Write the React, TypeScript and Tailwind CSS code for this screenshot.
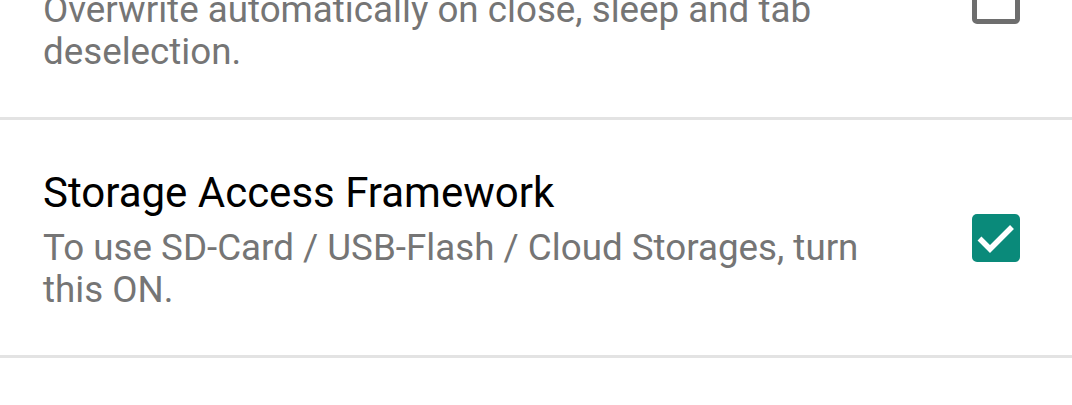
import React from "react";

type Pref = {
  title: string;
  summary: string;
  checked: boolean;
};

const prefs: Pref[] = [
  {
    title: "Auto save",
    summary: "Overwrite automatically on close, sleep and tab deselection.",
    checked: false,
  },
  {
    title: "Storage Access Framework",
    summary: "To use SD-Card / USB-Flash / Cloud Storages, turn this ON.",
    checked: true,
  },
];

function CheckBox({ checked }: { checked: boolean }) {
  if (!checked) {
    return (
      <div className="w-[48px] h-[48px] rounded-[5px] border-[5px] border-[#6e6e6e] bg-white" />
    );
  }
  return (
    <div className="w-[48px] h-[48px] rounded-[5px] bg-[#0a8a7a] flex items-center justify-center">
      <svg width="48" height="48" viewBox="0 0 48 48">
        <path
          d="M7.5 24.5 L18 35 L40 13"
          fill="none"
          stroke="#ffffff"
          strokeWidth="5.5"
        />
      </svg>
    </div>
  );
}

export default function App() {
  return (
    <main
      className="w-[1072px] h-[405px] overflow-hidden bg-white"
      style={{ fontFamily: "Roboto, 'Noto Sans', sans-serif" }}
    >
      <div className="-mt-[118px] flex flex-col">
        {prefs.map((p) => (
          <div key={p.title}>
            <div className="h-[235px] flex items-center pl-[43px] pr-[52px]">
              <div className="flex-1 pr-[80px] pt-[2px]">
                <div className="text-[42px] leading-[52px] text-black">
                  {p.title}
                </div>
                <div className="mt-[8px] text-[36.75px] leading-[42px] text-[#757575]">
                  {p.summary}
                </div>
              </div>
              <CheckBox checked={p.checked} />
            </div>
            <div className="h-[3px] bg-[#e3e3e3]" />
          </div>
        ))}
      </div>
    </main>
  );
}
